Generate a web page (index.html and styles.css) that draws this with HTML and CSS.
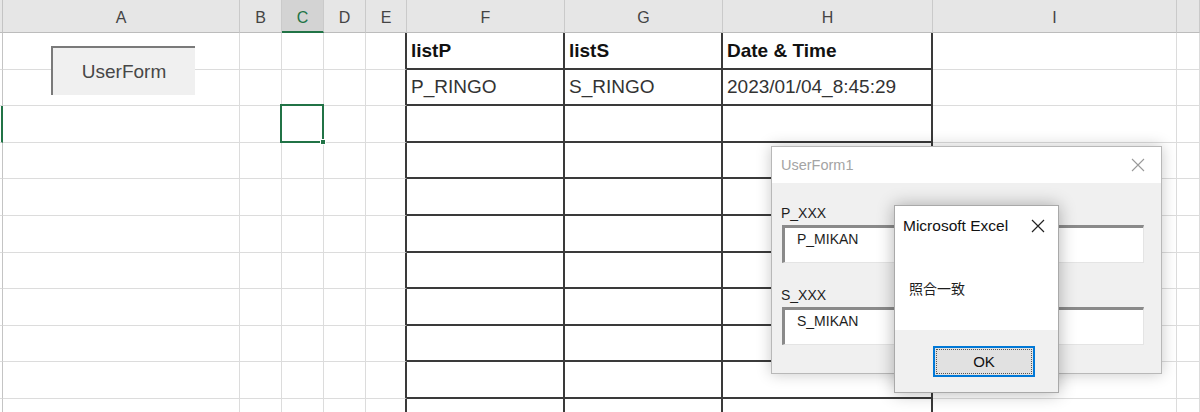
FILE: index.html
```html
<!DOCTYPE html>
<html lang="ja">
<head>
<meta charset="utf-8">
<title>Excel UserForm</title>
<link rel="stylesheet" href="styles.css">
</head>
<body>
<div class="sheet">
  <!-- header row -->
  <div class="c h s"></div><div class="c h">A</div><div class="c h">B</div><div class="c h sel">C</div><div class="c h">D</div><div class="c h">E</div><div class="c h">F</div><div class="c h">G</div><div class="c h">H</div><div class="c h">I</div><div class="c h"></div>
  <!-- row 1 -->
  <div class="c s"></div><div class="c"></div><div class="c"></div><div class="c"></div><div class="c"></div><div class="c e"></div><div class="c t b">listP</div><div class="c t b">listS</div><div class="c t b">Date &amp; Time</div><div class="c"></div><div class="c"></div>
  <!-- row 2 -->
  <div class="c s"></div><div class="c"></div><div class="c"></div><div class="c"></div><div class="c"></div><div class="c e"></div><div class="c t">P_RINGO</div><div class="c t">S_RINGO</div><div class="c t">2023/01/04_8:45:29</div><div class="c"></div><div class="c"></div>
  <!-- row 3 -->
  <div class="c s on"></div><div class="c"></div><div class="c"></div><div class="c active"></div><div class="c"></div><div class="c e"></div><div class="c t"></div><div class="c t"></div><div class="c t"></div><div class="c"></div><div class="c"></div>
  <!-- row 4 -->
  <div class="c s"></div><div class="c"></div><div class="c"></div><div class="c"></div><div class="c"></div><div class="c e"></div><div class="c t"></div><div class="c t"></div><div class="c t"></div><div class="c"></div><div class="c"></div>
  <!-- row 5 -->
  <div class="c s"></div><div class="c"></div><div class="c"></div><div class="c"></div><div class="c"></div><div class="c e"></div><div class="c t"></div><div class="c t"></div><div class="c t"></div><div class="c"></div><div class="c"></div>
  <!-- row 6 -->
  <div class="c s"></div><div class="c"></div><div class="c"></div><div class="c"></div><div class="c"></div><div class="c e"></div><div class="c t"></div><div class="c t"></div><div class="c t"></div><div class="c"></div><div class="c"></div>
  <!-- row 7 -->
  <div class="c s"></div><div class="c"></div><div class="c"></div><div class="c"></div><div class="c"></div><div class="c e"></div><div class="c t"></div><div class="c t"></div><div class="c t"></div><div class="c"></div><div class="c"></div>
  <!-- row 8 -->
  <div class="c s"></div><div class="c"></div><div class="c"></div><div class="c"></div><div class="c"></div><div class="c e"></div><div class="c t"></div><div class="c t"></div><div class="c t"></div><div class="c"></div><div class="c"></div>
  <!-- row 9 -->
  <div class="c s"></div><div class="c"></div><div class="c"></div><div class="c"></div><div class="c"></div><div class="c e"></div><div class="c t"></div><div class="c t"></div><div class="c t"></div><div class="c"></div><div class="c"></div>
  <!-- row 10 -->
  <div class="c s"></div><div class="c"></div><div class="c"></div><div class="c"></div><div class="c"></div><div class="c e"></div><div class="c t"></div><div class="c t"></div><div class="c t"></div><div class="c"></div><div class="c"></div>
  <!-- row 11 (partially visible) -->
  <div class="c s z"></div><div class="c z"></div><div class="c z"></div><div class="c z"></div><div class="c z"></div><div class="c e z"></div><div class="c t z"></div><div class="c t z"></div><div class="c t z"></div><div class="c z"></div><div class="c z"></div>

  <!-- floating button shape -->
  <div class="shape-btn">UserForm</div>

  <!-- UserForm1 dialog -->
  <div class="uf">
    <div class="uf-title">
      <span>UserForm1</span>
      <svg class="x" width="14" height="14" viewBox="0 0 14 14"><path d="M1 1 L13 13 M13 1 L1 13" stroke="#9a9a9a" stroke-width="1.1" fill="none"/></svg>
    </div>
    <div class="uf-body">
      <div class="lbl">P_XXX</div>
      <div class="tb">P_MIKAN</div>
      <div class="lbl gap">S_XXX</div>
      <div class="tb">S_MIKAN</div>
    </div>
  </div>

  <!-- Message box -->
  <div class="mb">
    <div class="mb-title">
      <span>Microsoft Excel</span>
      <svg class="x" width="14" height="14" viewBox="0 0 14 14"><path d="M1 1 L13 13 M13 1 L1 13" stroke="#222" stroke-width="1.2" fill="none"/></svg>
    </div>
    <div class="mb-msg">照合一致</div>
    <div class="mb-foot">
      <div class="ok">OK</div>
    </div>
  </div>
</div>
</body>
</html>
```

FILE: styles.css
```css
html, body {
  margin: 0;
  padding: 0;
}
body {
  width: 1200px;
  height: 412px;
  overflow: hidden;
  background: #ffffff;
  font-family: "Liberation Sans", Arial, sans-serif;
}
.sheet {
  position: relative;
  display: grid;
  grid-template-columns: 3px 237px 42px 42px 42px 41px 158px 158px 210px 244px 1fr;
  grid-template-rows: 33px 37px 36px 37px 36px 37px 37px 36px 37px 36px 37px 13px;
  width: 1200px;
  height: 412px;
  overflow: hidden;
}
.c {
  box-sizing: border-box;
  border-right: 1px solid #dcdcdc;
  border-bottom: 1px solid #dcdcdc;
  display: flex;
  align-items: center;
  padding-left: 4px;
  font-size: 19px;
  color: #333333;
  white-space: nowrap;
  overflow: hidden;
}
.h {
  background: #e6e6e6;
  border-right: 1px solid #cacaca;
  border-bottom: 1px solid #bcbcbc;
  justify-content: center;
  padding: 4px 0 0 0;
  font-size: 16px;
  color: #444444;
}
.h.sel {
  background: #d3d3d3;
  color: #217346;
  border-bottom: 2px solid #217346;
  padding-top: 5px;
}
.s {
  padding: 0;
  border-right: 1px solid #c4c4c4;
}
.h.s {
  border-right: 1px solid #c4c4c4;
}
.s.on {
  border-right: 2px solid #217346;
}
.e {
  border-right: 2px solid #3a3a3a;
}
.t {
  border-right: 2px solid #3a3a3a;
  border-bottom: 2px solid #3a3a3a;
}
.c.z {
  border-bottom: 0;
}
.b {
  font-weight: bold;
  color: #111111;
}
.active {
  position: relative;
  overflow: visible;
}
.active::after {
  content: "";
  position: absolute;
  left: -2px;
  top: -2px;
  right: -1px;
  bottom: -1px;
  border: 2px solid #217346;
}
.active::before {
  content: "";
  position: absolute;
  right: -3px;
  bottom: -3px;
  width: 6px;
  height: 6px;
  background: #217346;
  border: 1px solid #ffffff;
  box-sizing: border-box;
  z-index: 2;
}

/* floating button shape */
.shape-btn {
  position: absolute;
  left: 51px;
  top: 46px;
  width: 144px;
  height: 49px;
  box-sizing: border-box;
  background: #f0f0f0;
  border-top: 2px solid #7a7a7a;
  border-left: 2px solid #7a7a7a;
  display: flex;
  align-items: center;
  justify-content: center;
  font-size: 19px;
  color: #474747;
}

/* UserForm1 */
.uf {
  position: absolute;
  left: 771px;
  top: 146px;
  width: 391px;
  height: 228px;
  box-sizing: border-box;
  background: #f0f0f0;
  border: 1px solid #b8b8b8;
  box-shadow: 0 0 14px rgba(0, 0, 0, 0.22);
  display: flex;
  flex-direction: column;
}
.uf-title {
  height: 36px;
  background: #ffffff;
  display: flex;
  align-items: center;
  justify-content: space-between;
  padding: 0 16px 0 9px;
  font-size: 14.5px;
  color: #a4a4a4;
}
.uf-body {
  display: flex;
  flex-direction: column;
  padding: 22px 17px 0 10px;
}
.lbl {
  font-size: 14px;
  line-height: 16px;
  color: #1e1e1e;
  margin-left: -1px;
}
.lbl.gap {
  margin-top: 24px;
}
.tb {
  margin-top: 4px;
  height: 38px;
  box-sizing: border-box;
  background: #ffffff;
  border-top: 3px solid #8a8a8a;
  border-left: 3px solid #8a8a8a;
  border-right: 1px solid #e4e4e4;
  border-bottom: 1px solid #e4e4e4;
  padding: 3px 0 0 12px;
  font-size: 14px;
  line-height: 16px;
  color: #1e1e1e;
}

/* Message box */
.mb {
  position: absolute;
  left: 894px;
  top: 205px;
  width: 165px;
  height: 188px;
  box-sizing: border-box;
  background: #ffffff;
  border: 1px solid #a9a9a9;
  box-shadow: 0 0 16px rgba(0, 0, 0, 0.3);
  display: flex;
  flex-direction: column;
}
.mb-title {
  height: 39px;
  display: flex;
  align-items: center;
  justify-content: space-between;
  padding: 0 13px 0 8px;
  font-size: 15.5px;
  color: #111111;
}
.mb-msg {
  flex: 1;
  padding: 35px 0 0 14px;
  font-family: "Noto Sans CJK JP", "Liberation Sans", sans-serif;
  font-size: 14px;
  line-height: 16px;
  color: #1e1e1e;
}
.mb-foot {
  height: 62px;
  box-sizing: border-box;
  background: #f0f0f0;
  padding: 16px 0 0 38px;
}
.ok {
  position: relative;
  width: 102px;
  height: 31px;
  box-sizing: border-box;
  border: 2px solid #0078d7;
  background: #e1e1e1;
  display: flex;
  align-items: center;
  justify-content: center;
  font-size: 15px;
  color: #111111;
}
.ok::after {
  content: "";
  position: absolute;
  left: 1px;
  top: 1px;
  right: 1px;
  bottom: 1px;
  border: 1px dotted #555555;
}
.x {
  display: block;
}
```
